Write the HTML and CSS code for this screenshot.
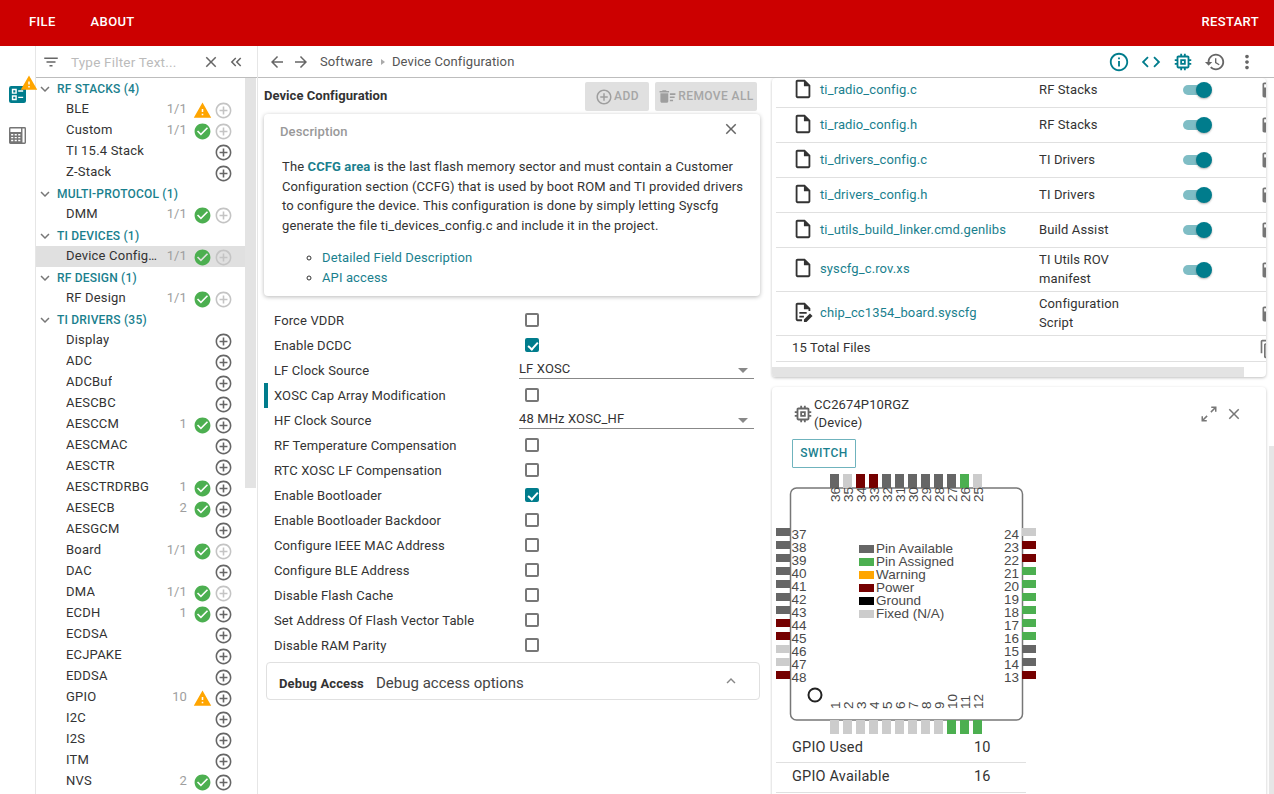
FILE: index.html
```html
<!DOCTYPE html>
<html lang="en">

<head>
	<meta charset="UTF-8">
	<title>SysConfig</title>
	<link rel="stylesheet" href="styles.css">
</head>

<body>
	<svg class="defs" width="0" height="0">
		<symbol id="i-filter" viewBox="0 0 24 24"><path d="M10 18h4v-2h-4v2zM3 6v2h18V6H3zm3 7h12v-2H6v2z"/></symbol>
		<symbol id="i-close" viewBox="0 0 24 24"><path d="M19 6.41L17.59 5 12 10.59 6.41 5 5 6.41 10.59 12 5 17.59 6.41 19 12 13.41 17.59 19 19 17.59 13.41 12z"/></symbol>
		<symbol id="i-dleft" viewBox="0 0 24 24"><path d="M17.59 18L19 16.59 14.42 12 19 7.41 17.59 6l-6 6z"/><path d="M11 18l1.41-1.41L7.83 12l4.58-4.59L11 6l-6 6z"/></symbol>
		<symbol id="i-more" viewBox="0 0 24 24"><path d="M16.59 8.59L12 13.17 7.41 8.59 6 10l6 6 6-6z"/></symbol>
		<symbol id="i-less" viewBox="0 0 24 24"><path d="M12 8l-6 6 1.41 1.41L12 10.83l4.59 4.58L18 14z"/></symbol>
		<symbol id="i-ok" viewBox="0 0 24 24"><path d="M12 2C6.48 2 2 6.48 2 12s4.48 10 10 10 10-4.48 10-10S17.52 2 12 2zm-2 15l-5-5 1.41-1.41L10 14.17l7.59-7.59L19 8l-9 9z"/></symbol>
		<symbol id="i-warn" viewBox="0 0 24 24"><path d="M1 21h22L12 2 1 21zm12-3h-2v-2h2v2zm0-4h-2v-4h2v4z"/></symbol>
		<symbol id="i-add" viewBox="0 0 24 24"><path d="M13 7h-2v4H7v2h4v4h2v-4h4v-2h-4V7zm-1-5C6.48 2 2 6.48 2 12s4.48 10 10 10 10-4.48 10-10S17.52 2 12 2zm0 18c-4.41 0-8-3.59-8-8s3.59-8 8-8 8 3.59 8 8-3.59 8-8 8z"/></symbol>
		<symbol id="i-back" viewBox="0 0 24 24"><path d="M20 11H7.83l5.59-5.59L12 4l-8 8 8 8 1.41-1.41L7.83 13H20v-2z"/></symbol>
		<symbol id="i-fwd" viewBox="0 0 24 24"><path d="M12 4l-1.41 1.41L16.17 11H4v2h12.17l-5.58 5.59L12 20l8-8z"/></symbol>
		<symbol id="i-info" viewBox="0 0 24 24"><path d="M11 7h2v2h-2zm0 4h2v6h-2zm1-9C6.48 2 2 6.48 2 12s4.48 10 10 10 10-4.48 10-10S17.52 2 12 2zm0 18c-4.41 0-8-3.59-8-8s3.59-8 8-8 8 3.59 8 8-3.59 8-8 8z"/></symbol>
		<symbol id="i-code" viewBox="0 0 24 24"><path d="M9.4 16.6L4.8 12l4.6-4.6L8 6l-6 6 6 6 1.4-1.4zm5.2 0l4.6-4.6-4.6-4.6L16 6l6 6-6 6-1.4-1.4z"/></symbol>
		<symbol id="i-chip" viewBox="0 0 24 24"><path d="M15 9H9v6h6V9zm-2 4h-2v-2h2v2zm8-2V9h-2V7c0-1.1-.9-2-2-2h-2V3h-2v2h-2V3H9v2H7c-1.1 0-2 .9-2 2v2H3v2h2v2H3v2h2v2c0 1.1.9 2 2 2h2v2h2v-2h2v2h2v-2h2c1.1 0 2-.9 2-2v-2h2v-2h-2v-2h2zm-4 6H7V7h10v10z"/></symbol>
		<symbol id="i-history" viewBox="0 0 24 24"><path d="M13 3c-4.97 0-9 4.03-9 9H1l3.89 3.89.07.14L9 12H6c0-3.87 3.13-7 7-7s7 3.13 7 7-3.13 7-7 7c-1.93 0-3.68-.79-4.94-2.06l-1.42 1.42C8.27 19.99 10.51 21 13 21c4.97 0 9-4.03 9-9s-4.03-9-9-9zm-1 5v5l4.28 2.54.72-1.21-3.5-2.08V8H12z"/></symbol>
		<symbol id="i-vert" viewBox="0 0 24 24"><path d="M12 8c1.1 0 2-.9 2-2s-.9-2-2-2-2 .9-2 2 .9 2 2 2zm0 2c-1.1 0-2 .9-2 2s.9 2 2 2 2-.9 2-2-.9-2-2-2zm0 6c-1.1 0-2 .9-2 2s.9 2 2 2 2-.9 2-2-.9-2-2-2z"/></symbol>
		<symbol id="i-file" viewBox="0 0 24 24"><path d="M14 2H6c-1.1 0-1.99.9-1.99 2L4 20c0 1.1.89 2 1.99 2H18c1.1 0 2-.9 2-2V8l-6-6zm4 18H6V4h7v5h5v11z"/></symbol>
		<symbol id="i-script" viewBox="0 0 24 24"><path d="M14 2H6c-1.1 0-2 .9-2 2v16c0 1.1.9 2 2 2h5v-2H6V4h7v5h5v2h2V8l-6-6z"/><path d="M8 12h8v2H8zm0 4h5v2H8z"/><path d="M13 20.2V23h2.8l6.6-6.6-2.8-2.8z"/></symbol>
		<symbol id="i-sweep" viewBox="0 0 24 24"><path d="M15 16h4v2h-4zm0-8h7v2h-7zm0 4h6v2h-6zM3 18c0 1.1.9 2 2 2h6c1.1 0 2-.9 2-2V8H3v10zM14 5h-3l-1-1H6L5 5H2v2h12z"/></symbol>
		<symbol id="i-save" viewBox="0 0 24 24"><path d="M17 3H5c-1.11 0-2 .9-2 2v14c0 1.1.89 2 2 2h14c1.1 0 2-.9 2-2V7l-4-4zm-5 16c-1.66 0-3-1.34-3-3s1.34-3 3-3 3 1.34 3 3-1.34 3-3 3zm3-10H5V5h10v4z"/></symbol>
		<symbol id="i-copy" viewBox="0 0 24 24"><path d="M16 1H4c-1.1 0-2 .9-2 2v14h2V3h12V1zm3 4H8c-1.1 0-2 .9-2 2v14c0 1.1.9 2 2 2h11c1.1 0 2-.9 2-2V7c0-1.1-.9-2-2-2zm0 16H8V7h11v14z"/></symbol>
		<symbol id="i-expand" viewBox="0 0 24 24"><path fill="none" stroke="currentColor" stroke-width="2" d="M15 3h6v6M21 3l-6.500 6.500M9 21H3v-6M3 21l6.500-6.500"/></symbol>
		<symbol id="i-list" viewBox="0 0 24 24"><path fill-rule="evenodd" d="M3 0h18a3 3 0 0 1 3 3v18a3 3 0 0 1-3 3H3a3 3 0 0 1-3-3V3a3 3 0 0 1 3-3zM4 4v7h7V4zm2 2h3v3H6zM4 13v7h7v-7zm2 2h3v3H6zm7-9v2h7V6zm0 9v2h7v-2z"/></symbol>
		<symbol id="i-calc" viewBox="0 0 24 24"><path fill-rule="evenodd" d="M2 0h20a2 2 0 0 1 2 2v20a2 2 0 0 1-2 2H2a2 2 0 0 1-2-2V2a2 2 0 0 1 2-2zm0 2v5h15V2zm17 0v20h3V2zM3 10v2h3v-2zm5 0v2h3v-2zm5 0v2h3v-2zM3 14v2h3v-2zm5 0v2h3v-2zm5 0v2h3v-2zM3 18v2h3v-2zm5 0v2h3v-2zm5 0v2h3v-2z"/></symbol>
	</svg>

	<header class="topbar">
		<nav class="topbar__menu">
			<span>FILE</span>
			<span>ABOUT</span>
		</nav>
		<span class="topbar__restart">RESTART</span>
	</header>

	<div class="app">
		<aside class="rail">
			<div class="rail__item rail__item--active">
				<svg class="rail__icon"><use href="#i-list"/></svg>
				<svg class="rail__badge"><use href="#i-warn"/></svg>
			</div>
			<div class="rail__item">
				<svg class="rail__icon rail__icon--grey"><use href="#i-calc"/></svg>
			</div>
		</aside>

		<section class="sidebar">
			<div class="filter">
				<svg class="filter__icon"><use href="#i-filter"/></svg>
				<span class="filter__text">Type Filter Text...</span>
				<svg class="filter__btn"><use href="#i-close"/></svg>
				<svg class="filter__btn"><use href="#i-dleft"/></svg>
			</div>
			<div class="sidebar__body">
				<ul class="tree">
					<li class="tree__head"><svg><use href="#i-more"/></svg>RF STACKS (4)</li>
					<li class="tree__row"><span class="name">BLE</span><span class="count">1/1</span><svg class="st warn"><use href="#i-warn"/></svg><svg class="plus off"><use href="#i-add"/></svg></li>
					<li class="tree__row"><span class="name">Custom</span><span class="count">1/1</span><svg class="st ok"><use href="#i-ok"/></svg><svg class="plus off"><use href="#i-add"/></svg></li>
					<li class="tree__row"><span class="name">TI 15.4 Stack</span><svg class="plus"><use href="#i-add"/></svg></li>
					<li class="tree__row"><span class="name">Z-Stack</span><svg class="plus"><use href="#i-add"/></svg></li>
					<li class="tree__head"><svg><use href="#i-more"/></svg>MULTI-PROTOCOL (1)</li>
					<li class="tree__row"><span class="name">DMM</span><span class="count">1/1</span><svg class="st ok"><use href="#i-ok"/></svg><svg class="plus off"><use href="#i-add"/></svg></li>
					<li class="tree__head"><svg><use href="#i-more"/></svg>TI DEVICES (1)</li>
					<li class="tree__row tree__row--sel"><span class="name">Device Configuration</span><span class="count">1/1</span><svg class="st ok"><use href="#i-ok"/></svg><svg class="plus off"><use href="#i-add"/></svg></li>
					<li class="tree__head"><svg><use href="#i-more"/></svg>RF DESIGN (1)</li>
					<li class="tree__row"><span class="name">RF Design</span><span class="count">1/1</span><svg class="st ok"><use href="#i-ok"/></svg><svg class="plus off"><use href="#i-add"/></svg></li>
					<li class="tree__head"><svg><use href="#i-more"/></svg>TI DRIVERS (35)</li>
					<li class="tree__row"><span class="name">Display</span><svg class="plus"><use href="#i-add"/></svg></li>
					<li class="tree__row"><span class="name">ADC</span><svg class="plus"><use href="#i-add"/></svg></li>
					<li class="tree__row"><span class="name">ADCBuf</span><svg class="plus"><use href="#i-add"/></svg></li>
					<li class="tree__row"><span class="name">AESCBC</span><svg class="plus"><use href="#i-add"/></svg></li>
					<li class="tree__row"><span class="name">AESCCM</span><span class="count">1</span><svg class="st ok"><use href="#i-ok"/></svg><svg class="plus"><use href="#i-add"/></svg></li>
					<li class="tree__row"><span class="name">AESCMAC</span><svg class="plus"><use href="#i-add"/></svg></li>
					<li class="tree__row"><span class="name">AESCTR</span><svg class="plus"><use href="#i-add"/></svg></li>
					<li class="tree__row"><span class="name">AESCTRDRBG</span><span class="count">1</span><svg class="st ok"><use href="#i-ok"/></svg><svg class="plus"><use href="#i-add"/></svg></li>
					<li class="tree__row"><span class="name">AESECB</span><span class="count">2</span><svg class="st ok"><use href="#i-ok"/></svg><svg class="plus"><use href="#i-add"/></svg></li>
					<li class="tree__row"><span class="name">AESGCM</span><svg class="plus"><use href="#i-add"/></svg></li>
					<li class="tree__row"><span class="name">Board</span><span class="count">1/1</span><svg class="st ok"><use href="#i-ok"/></svg><svg class="plus off"><use href="#i-add"/></svg></li>
					<li class="tree__row"><span class="name">DAC</span><svg class="plus"><use href="#i-add"/></svg></li>
					<li class="tree__row"><span class="name">DMA</span><span class="count">1/1</span><svg class="st ok"><use href="#i-ok"/></svg><svg class="plus off"><use href="#i-add"/></svg></li>
					<li class="tree__row"><span class="name">ECDH</span><span class="count">1</span><svg class="st ok"><use href="#i-ok"/></svg><svg class="plus"><use href="#i-add"/></svg></li>
					<li class="tree__row"><span class="name">ECDSA</span><svg class="plus"><use href="#i-add"/></svg></li>
					<li class="tree__row"><span class="name">ECJPAKE</span><svg class="plus"><use href="#i-add"/></svg></li>
					<li class="tree__row"><span class="name">EDDSA</span><svg class="plus"><use href="#i-add"/></svg></li>
					<li class="tree__row"><span class="name">GPIO</span><span class="count">10</span><svg class="st warn"><use href="#i-warn"/></svg><svg class="plus"><use href="#i-add"/></svg></li>
					<li class="tree__row"><span class="name">I2C</span><svg class="plus"><use href="#i-add"/></svg></li>
					<li class="tree__row"><span class="name">I2S</span><svg class="plus"><use href="#i-add"/></svg></li>
					<li class="tree__row"><span class="name">ITM</span><svg class="plus"><use href="#i-add"/></svg></li>
					<li class="tree__row"><span class="name">NVS</span><span class="count">2</span><svg class="st ok"><use href="#i-ok"/></svg><svg class="plus"><use href="#i-add"/></svg></li>
				</ul>
				<div class="sidebar__thumb"></div>
			</div>
		</section>

		<main class="content">
			<div class="toolbar">
				<svg class="toolbar__nav"><use href="#i-back"/></svg>
				<svg class="toolbar__nav"><use href="#i-fwd"/></svg>
				<span class="crumb">Software</span>
				<span class="crumb__sep"></span>
				<span class="crumb">Device Configuration</span>
				<div class="toolbar__right">
					<svg class="tool tool--teal"><use href="#i-info"/></svg>
					<svg class="tool tool--teal"><use href="#i-code"/></svg>
					<svg class="tool tool--teal"><use href="#i-chip"/></svg>
					<svg class="tool"><use href="#i-history"/></svg>
					<svg class="tool"><use href="#i-vert"/></svg>
				</div>
			</div>

			<div class="panes">
				<section class="config">
					<div class="config__title">
						<h1>Device Configuration</h1>
						<span class="btn btn--add"><svg><use href="#i-add"/></svg>ADD</span>
						<span class="btn btn--remove"><svg><use href="#i-sweep"/></svg>REMOVE ALL</span>
					</div>

					<div class="desc">
						<div class="desc__head">
							<span>Description</span>
							<svg><use href="#i-close"/></svg>
						</div>
						<p>The <b>CCFG area</b> is the last flash memory sector and must contain a Customer Configuration section (CCFG) that is used by boot ROM and TI provided drivers to configure the device. This configuration is done by simply letting Syscfg generate the file ti_devices_config.c and include it in the project.</p>
						<ul>
							<li>Detailed Field Description</li>
							<li>API access</li>
						</ul>
					</div>

					<div class="form">
						<div class="field"><label>Force VDDR</label><span class="check"></span></div>
						<div class="field"><label>Enable DCDC</label><span class="check check--on"></span></div>
						<div class="field"><label>LF Clock Source</label><span class="select">LF XOSC</span></div>
						<div class="field field--mark"><label>XOSC Cap Array Modification</label><span class="check"></span></div>
						<div class="field"><label>HF Clock Source</label><span class="select">48 MHz XOSC_HF</span></div>
						<div class="field"><label>RF Temperature Compensation</label><span class="check"></span></div>
						<div class="field"><label>RTC XOSC LF Compensation</label><span class="check"></span></div>
						<div class="field"><label>Enable Bootloader</label><span class="check check--on"></span></div>
						<div class="field"><label>Enable Bootloader Backdoor</label><span class="check"></span></div>
						<div class="field"><label>Configure IEEE MAC Address</label><span class="check"></span></div>
						<div class="field"><label>Configure BLE Address</label><span class="check"></span></div>
						<div class="field"><label>Disable Flash Cache</label><span class="check"></span></div>
						<div class="field"><label>Set Address Of Flash Vector Table</label><span class="check"></span></div>
						<div class="field"><label>Disable RAM Parity</label><span class="check"></span></div>
					</div>

					<div class="accordion">
						<b>Debug Access</b>
						<span>Debug access options</span>
						<svg><use href="#i-less"/></svg>
					</div>
				</section>

				<section class="side">
					<div class="side__cards">
						<div class="card card--files">
							<div class="files">
								<div class="file"><svg class="file__icon"><use href="#i-file"/></svg><span class="file__name">ti_radio_config.c</span><span class="file__cat">RF Stacks</span><span class="toggle"></span><svg class="file__save"><use href="#i-save"/></svg></div>
								<div class="file"><svg class="file__icon"><use href="#i-file"/></svg><span class="file__name">ti_radio_config.h</span><span class="file__cat">RF Stacks</span><span class="toggle"></span><svg class="file__save"><use href="#i-save"/></svg></div>
								<div class="file"><svg class="file__icon"><use href="#i-file"/></svg><span class="file__name">ti_drivers_config.c</span><span class="file__cat">TI Drivers</span><span class="toggle"></span><svg class="file__save"><use href="#i-save"/></svg></div>
								<div class="file"><svg class="file__icon"><use href="#i-file"/></svg><span class="file__name">ti_drivers_config.h</span><span class="file__cat">TI Drivers</span><span class="toggle"></span><svg class="file__save"><use href="#i-save"/></svg></div>
								<div class="file"><svg class="file__icon"><use href="#i-file"/></svg><span class="file__name">ti_utils_build_linker.cmd.genlibs</span><span class="file__cat">Build Assist</span><span class="toggle"></span><svg class="file__save"><use href="#i-save"/></svg></div>
								<div class="file file--tall"><svg class="file__icon"><use href="#i-file"/></svg><span class="file__name">syscfg_c.rov.xs</span><span class="file__cat">TI Utils ROV manifest</span><span class="toggle"></span><svg class="file__save"><use href="#i-save"/></svg></div>
								<div class="file file--tall"><svg class="file__icon"><use href="#i-script"/></svg><span class="file__name">chip_cc1354_board.syscfg</span><span class="file__cat">Configuration Script</span><span></span><svg class="file__save"><use href="#i-save"/></svg></div>
								<div class="file file--total"><span class="file__total">15 Total Files</span><svg class="file__copy"><use href="#i-copy"/></svg></div>
							</div>
							<div class="hscroll"></div>
						</div>

						<div class="card card--device">
							<div class="device__head">
								<svg class="device__chip"><use href="#i-chip"/></svg>
								<div class="device__title">CC2674P10RGZ<br>(Device)</div>
								<svg class="device__btn device__btn--first"><use href="#i-expand"/></svg>
								<svg class="device__btn"><use href="#i-close"/></svg>
							</div>
							<span class="switch">SWITCH</span>

							<svg class="pinout" width="262" height="266" viewBox="0 0 262 266">
								<rect class="body" x="14.5" y="18" width="232" height="232" rx="6"/>
								<circle class="dot" cx="39" cy="225" r="6.5"/>

								<g class="pins">
									<rect class="av" x="54" y="4" width="9" height="14"/><rect class="fx" x="67" y="4" width="9" height="14"/><rect class="pw" x="80" y="4" width="9" height="14"/><rect class="pw" x="93" y="4" width="9" height="14"/><rect class="av" x="106" y="4" width="9" height="14"/><rect class="av" x="119" y="4" width="9" height="14"/><rect class="av" x="132" y="4" width="9" height="14"/><rect class="av" x="145" y="4" width="9" height="14"/><rect class="av" x="158" y="4" width="9" height="14"/><rect class="av" x="171" y="4" width="9" height="14"/><rect class="as" x="184" y="4" width="9" height="14"/><rect class="fx" x="197" y="4" width="9" height="14"/>
									<rect class="fx" x="54" y="250" width="9" height="14"/><rect class="fx" x="67" y="250" width="9" height="14"/><rect class="fx" x="80" y="250" width="9" height="14"/><rect class="fx" x="93" y="250" width="9" height="14"/><rect class="fx" x="106" y="250" width="9" height="14"/><rect class="fx" x="119" y="250" width="9" height="14"/><rect class="fx" x="132" y="250" width="9" height="14"/><rect class="fx" x="145" y="250" width="9" height="14"/><rect class="fx" x="158" y="250" width="9" height="14"/><rect class="as" x="171" y="250" width="9" height="14"/><rect class="as" x="184" y="250" width="9" height="14"/><rect class="as" x="197" y="250" width="9" height="14"/>
									<rect class="av" x="0" y="58" width="14" height="8"/><rect class="av" x="0" y="71" width="14" height="8"/><rect class="av" x="0" y="84" width="14" height="8"/><rect class="av" x="0" y="97" width="14" height="8"/><rect class="av" x="0" y="110" width="14" height="8"/><rect class="av" x="0" y="123" width="14" height="8"/><rect class="av" x="0" y="136" width="14" height="8"/><rect class="pw" x="0" y="149" width="14" height="8"/><rect class="pw" x="0" y="162" width="14" height="8"/><rect class="fx" x="0" y="175" width="14" height="8"/><rect class="fx" x="0" y="188" width="14" height="8"/><rect class="pw" x="0" y="201" width="14" height="8"/>
									<rect class="fx" x="246" y="58" width="14" height="8"/><rect class="pw" x="246" y="71" width="14" height="8"/><rect class="pw" x="246" y="84" width="14" height="8"/><rect class="as" x="246" y="97" width="14" height="8"/><rect class="as" x="246" y="110" width="14" height="8"/><rect class="as" x="246" y="123" width="14" height="8"/><rect class="as" x="246" y="136" width="14" height="8"/><rect class="as" x="246" y="149" width="14" height="8"/><rect class="as" x="246" y="162" width="14" height="8"/><rect class="av" x="246" y="175" width="14" height="8"/><rect class="av" x="246" y="188" width="14" height="8"/><rect class="pw" x="246" y="201" width="14" height="8"/>
								</g>

								<g class="labels">
									<text transform="translate(63.5,32) rotate(-90)">36</text><text transform="translate(76.5,32) rotate(-90)">35</text><text transform="translate(89.5,32) rotate(-90)">34</text><text transform="translate(102.5,32) rotate(-90)">33</text><text transform="translate(115.5,32) rotate(-90)">32</text><text transform="translate(128.5,32) rotate(-90)">31</text><text transform="translate(141.5,32) rotate(-90)">30</text><text transform="translate(154.5,32) rotate(-90)">29</text><text transform="translate(167.5,32) rotate(-90)">28</text><text transform="translate(180.5,32) rotate(-90)">27</text><text transform="translate(193.5,32) rotate(-90)">26</text><text transform="translate(206.5,32) rotate(-90)">25</text>
									<text transform="translate(63.5,239) rotate(-90)">1</text><text transform="translate(76.5,239) rotate(-90)">2</text><text transform="translate(89.5,239) rotate(-90)">3</text><text transform="translate(102.5,239) rotate(-90)">4</text><text transform="translate(115.5,239) rotate(-90)">5</text><text transform="translate(128.5,239) rotate(-90)">6</text><text transform="translate(141.5,239) rotate(-90)">7</text><text transform="translate(154.5,239) rotate(-90)">8</text><text transform="translate(167.5,239) rotate(-90)">9</text><text transform="translate(180.5,239) rotate(-90)">10</text><text transform="translate(193.5,239) rotate(-90)">11</text><text transform="translate(206.5,239) rotate(-90)">12</text>
									<text x="15.5" y="69">37</text><text x="15.5" y="82">38</text><text x="15.5" y="95">39</text><text x="15.5" y="108">40</text><text x="15.5" y="121">41</text><text x="15.5" y="134">42</text><text x="15.5" y="147">43</text><text x="15.5" y="160">44</text><text x="15.5" y="173">45</text><text x="15.5" y="186">46</text><text x="15.5" y="199">47</text><text x="15.5" y="212">48</text>
									<g class="labels--end"><text x="243" y="69">24</text><text x="243" y="82">23</text><text x="243" y="95">22</text><text x="243" y="108">21</text><text x="243" y="121">20</text><text x="243" y="134">19</text><text x="243" y="147">18</text><text x="243" y="160">17</text><text x="243" y="173">16</text><text x="243" y="186">15</text><text x="243" y="199">14</text><text x="243" y="212">13</text></g>
								</g>

								<g class="legend">
									<rect class="av" x="83" y="75" width="15" height="8"/><text x="100" y="83">Pin Available</text>
									<rect class="as" x="83" y="88" width="15" height="8"/><text x="100" y="96">Pin Assigned</text>
									<rect class="wn" x="83" y="101" width="15" height="8"/><text x="100" y="109">Warning</text>
									<rect class="pw" x="83" y="114" width="15" height="8"/><text x="100" y="122">Power</text>
									<rect class="gd" x="83" y="127" width="15" height="8"/><text x="100" y="135">Ground</text>
									<rect class="fx" x="83" y="140" width="15" height="8"/><text x="100" y="148">Fixed (N/A)</text>
								</g>
							</svg>

							<div class="stats">
								<div class="stat"><span>GPIO Used</span><span>10</span></div>
								<div class="stat stat--last"><span>GPIO Available</span><span>16</span></div>
							</div>
						</div>
					</div>
					<div class="side__thumb"></div>
				</section>
			</div>
		</main>
	</div>
</body>

</html>
```

FILE: styles.css
```css
* {
	box-sizing: border-box;
}

html,
body {
	margin: 0;
	height: 794px;
	overflow: hidden;
}

body {
	font-family: Roboto, "Open Sans", sans-serif;
	font-size: 13px;
	letter-spacing: .12px;
	color: #333;
	background: #fff;
}

svg {
	display: block;
	flex: none;
	fill: currentColor;
}

.defs {
	position: absolute;
}

/* top bar */
.topbar {
	display: flex;
	justify-content: space-between;
	align-items: center;
	height: 46px;
	padding: 0 15px 4px 29px;
	background: #cc0000;
	color: #fff;
	font-weight: 500;
	font-size: 13px;
	letter-spacing: .35px;
}

.topbar__menu {
	display: flex;
	gap: 35px;
}

.app {
	display: flex;
	height: 748px;
}

/* icon rail */
.rail {
	width: 36px;
	padding-top: 40px;
	border-right: 1px solid #e6e6e6;
	flex: none;
}

.rail__item {
	position: relative;
	height: 41px;
	padding-left: 9px;
}

.rail__icon {
	width: 17px;
	height: 17px;
	color: #007c8c;
}

.rail__icon--grey {
	color: #757575;
}

.rail__badge {
	position: absolute;
	left: 20px;
	top: -12px;
	width: 18px;
	height: 18px;
	color: #ffa500;
	z-index: 2;
}

/* left tree */
.sidebar {
	width: 222px;
	flex: none;
	border-right: 1px solid #e6e6e6;
	display: flex;
	flex-direction: column;
}

.filter {
	display: flex;
	align-items: center;
	height: 32px;
	padding-left: 6px;
	border-bottom: 1px solid #bdbdbd;
	color: #666;
}

.filter__icon {
	width: 18px;
	height: 18px;
}

.filter__text {
	width: 131px;
	margin-left: 11px;
	color: #bbb;
	font-size: 13.5px;
	letter-spacing: .2px;
}

.filter__btn {
	width: 18px;
	height: 18px;
	margin-right: 7px;
}

.sidebar__body {
	display: flex;
	flex: 1;
	overflow: hidden;
}

.tree {
	list-style: none;
	margin: 0;
	padding: 0;
	width: 209px;
	flex: none;
}

.tree__head,
.tree__row {
	display: flex;
	align-items: center;
	height: 21px;
}

.tree__head {
	color: #1a7f8e;
	font-weight: 500;
	font-size: 12px;
	letter-spacing: .2px;
}

.tree__head svg {
	width: 18px;
	height: 18px;
	margin: 0 3px 0 0;
	color: #777;
}

.tree__row {
	padding: 0 12px 0 30px;
}

.tree__row--sel {
	background: #e0e0e0;
}

.name {
	max-width: 92px;
	margin-bottom: 2px;
	letter-spacing: .2px;
	white-space: nowrap;
	overflow: hidden;
	text-overflow: ellipsis;
}

.count {
	margin: 0 6px 2px auto;
	color: #9e9e9e;
}

.st {
	width: 19px;
	height: 19px;
	margin-top: 2px;
	margin-right: 2px;
}

.ok {
	color: #4caf50;
}

.warn {
	color: #ffa500;
}

.plus {
	width: 19px;
	height: 19px;
	margin-top: 2px;
	margin-left: auto;
	color: #666;
}

.st + .plus {
	margin-left: 0;
}

.plus.off {
	color: #c4c4c4;
}

.sidebar__thumb {
	width: 11px;
	height: 410px;
	background: #e3e3e3;
}

/* toolbar */
.content {
	flex: 1;
	min-width: 0;
	display: flex;
	flex-direction: column;
}

.toolbar {
	display: flex;
	align-items: center;
	height: 32px;
	padding: 0 11px 0 10px;
	border-bottom: 1px solid #bdbdbd;
	color: #555;
}

.toolbar__nav {
	width: 18px;
	height: 18px;
	margin-right: 6px;
	color: #666;
}

.crumb {
	color: #555;
}

.toolbar__nav + .crumb {
	margin-left: 4px;
}

.crumb__sep {
	width: 0;
	height: 0;
	margin: 0 7px 0 8px;
	border-left: 4px solid #aaa;
	border-top: 3px solid transparent;
	border-bottom: 3px solid transparent;
}

.toolbar__right {
	display: flex;
	margin-left: auto;
}

.tool {
	width: 22px;
	height: 22px;
	margin: 0 5px;
	color: #666;
}

.tool--teal {
	color: #007c8c;
}

.panes {
	display: flex;
	flex: 1;
	min-height: 0;
}

/* middle pane */
.config {
	width: 512px;
	flex: none;
	padding-left: 6px;
}

.config__title {
	display: flex;
	align-items: center;
	gap: 6px;
	width: 493px;
	height: 29px;
	margin-top: 4px;
}

.config__title h1 {
	margin: 0 auto 2px 0;
	font-size: 13px;
	font-weight: 700;
	letter-spacing: .05px;
	color: #333;
}

.btn {
	display: flex;
	align-items: center;
	justify-content: center;
	height: 29px;
	padding-bottom: 2px;
	border-radius: 2px;
	background: #e0e0e0;
	color: #a6a6a6;
	font-weight: 500;
	font-size: 12px;
	letter-spacing: .4px;
}

.btn svg {
	color: #9e9e9e;
	margin: 2px 1px 0 0;
}

.btn--add {
	width: 64px;
}

.btn--add svg {
	width: 18px;
	height: 18px;
}

.btn--remove {
	width: 102px;
}

.btn--remove svg {
	width: 19px;
	height: 19px;
}

.desc {
	width: 496px;
	height: 182px;
	margin-top: 3px;
	border-radius: 4px;
	box-shadow: 0 1px 4px rgba(0, 0, 0, .28);
}

.desc__head {
	display: flex;
	align-items: center;
	justify-content: space-between;
	height: 35px;
	padding: 0 20px 0 16px;
	color: #999;
	font-weight: 500;
}

.desc__head svg {
	width: 18px;
	height: 18px;
	margin-top: -5px;
	color: #666;
}

.desc p {
	margin: 8px 0 0;
	padding: 0 16px 0 18px;
	line-height: 19.6px;
}

.desc b {
	color: #1a7f8e;
	font-weight: 700;
}

.desc ul {
	margin: 13px 0 0;
	padding-left: 58px;
	list-style: circle;
	line-height: 20px;
	color: #1a7f8e;
}

.desc li::marker {
	color: #333;
}

/* form */
.form {
	margin-top: 12px;
}

.field {
	display: grid;
	grid-template-columns: 251px 235px;
	align-items: center;
	height: 25px;
	border-left: 4px solid transparent;
}

.field label {
	padding-left: 6px;
}

.field--mark {
	border-left-color: #007c8c;
}

.check {
	display: block;
	position: relative;
	width: 13.5px;
	height: 13.5px;
	margin: -1px 0 0 6px;
	border: 2px solid #777;
	border-radius: 2px;
}

.check--on {
	background: #007c8c;
	border-color: #007c8c;
}

.check--on::after {
	content: "";
	position: absolute;
	left: 3px;
	top: 0;
	width: 4px;
	height: 8px;
	border: solid #fff;
	border-width: 0 2px 2px 0;
	transform: rotate(42deg);
}

.select {
	position: relative;
	display: block;
	height: 21px;
	padding-top: 1px;
	border-bottom: 1px solid #888;
	line-height: 20px;
	align-self: start;
}

.select::after {
	content: "";
	position: absolute;
	right: 6px;
	top: 10px;
	border-top: 5px solid #888;
	border-left: 5px solid transparent;
	border-right: 5px solid transparent;
}

.accordion {
	display: flex;
	align-items: center;
	width: 494px;
	height: 38px;
	margin: 4px 0 0 2px;
	padding: 4px 0 0 12px;
	border: 1px solid #e0e0e0;
	border-radius: 4px;
}

.accordion b {
	width: 97px;
	font-weight: 700;
}

.accordion span {
	font-size: 15px;
	letter-spacing: 0;
	color: #444;
}

.accordion svg {
	width: 18px;
	height: 18px;
	margin: -5px 19px 0 auto;
	color: #888;
}

/* right pane */
.side {
	display: flex;
	width: 504px;
	flex: none;
	overflow: hidden;
}

.side__cards {
	width: 494px;
	margin-left: 2px;
	flex: none;
}

.side__thumb {
	width: 5px;
	margin: 368px 0 0 3px;
	background: #e6e6e6;
}

.card {
	border-radius: 4px;
	box-shadow: 0 1px 3px rgba(0, 0, 0, .25);
	overflow: hidden;
}

.card--files {
	height: 299px;
}

.files {
	margin: -5px 0 0 4px;
}

.file {
	display: grid;
	grid-template-columns: 28px 219px 144px 77px 20px;
	align-items: center;
	height: 35px;
	padding-left: 16px;
	border-bottom: 1px solid #e0e0e0;
}

.file--tall {
	height: 44px;
}

.file--total {
	height: 26px;
}

.file__icon {
	width: 22px;
	height: 22px;
	margin-top: -3px;
	color: #333;
}

.file__name {
	margin-bottom: 2px;
	color: #1a7f8e;
}

.file__cat {
	display: block;
	max-width: 100px;
	margin-bottom: 2px;
	line-height: 19px;
}

.toggle {
	position: relative;
	display: block;
	width: 21px;
	height: 10px;
	border-radius: 5px;
	background: #7fbdc5;
}

.toggle::after {
	content: "";
	position: absolute;
	right: -8px;
	top: -3px;
	width: 16px;
	height: 16px;
	border-radius: 50%;
	background: #007c8c;
	box-shadow: 0 1px 2px rgba(0, 0, 0, .3);
}

.file__save {
	width: 20px;
	height: 20px;
	color: #757575;
}

.file__total {
	grid-column: 1 / 5;
	margin-bottom: 2px;
}

.file__copy {
	width: 20px;
	height: 20px;
	margin-left: -1px;
	color: #757575;
}

.hscroll {
	width: 472px;
	height: 10px;
	margin-top: 5px;
	background: #e3e3e3;
}

.card--device {
	height: 420px;
	margin-top: 10px;
	padding: 9px 0 0 4px;
}

.device__head {
	display: flex;
	align-items: center;
	padding-left: 16px;
	height: 36px;
}

.device__chip {
	width: 22px;
	height: 22px;
	color: #666;
}

.device__title {
	line-height: 18px;
}

.device__btn {
	width: 18px;
	height: 18px;
	color: #777;
	margin-left: 7px;
}

.device__btn--first {
	margin-left: auto;
}

.device__btn:last-child {
	margin-right: 23px;
}

.switch {
	display: block;
	width: 64px;
	height: 29px;
	margin: 7px 0 0 16px;
	border: 1px solid #6fb3bd;
	border-radius: 1px;
	color: #1a7f8e;
	font-weight: 500;
	font-size: 12px;
	letter-spacing: .5px;
	line-height: 26px;
	text-align: center;
}

.pinout {
	margin-top: 2px;
}

.body {
	fill: #fff;
	stroke: #777;
	stroke-width: 1.5;
}

.dot {
	fill: none;
	stroke: #222;
	stroke-width: 2;
}

.av {
	fill: #666;
}

.fx {
	fill: #ccc;
}

.pw {
	fill: #750000;
}

.as {
	fill: #4caf50;
}

.wn {
	fill: #ffa500;
}

.gd {
	fill: #000;
}

.pinout text {
	font-family: "Liberation Sans", Arial, sans-serif;
	font-size: 13.5px;
	letter-spacing: 0;
	fill: #4a4a4a;
}

.labels--end text {
	text-anchor: end;
}

.stats {
	width: 250px;
	margin-top: -3px;
	font-size: 14.5px;
	letter-spacing: .2px;
}

.stat {
	display: grid;
	grid-template-columns: 182px 1fr;
	align-items: center;
	height: 30px;
	padding-left: 16px;
	border-bottom: 1px solid #e0e0e0;
}

.stat--last {
	padding-bottom: 2px;
}
```
